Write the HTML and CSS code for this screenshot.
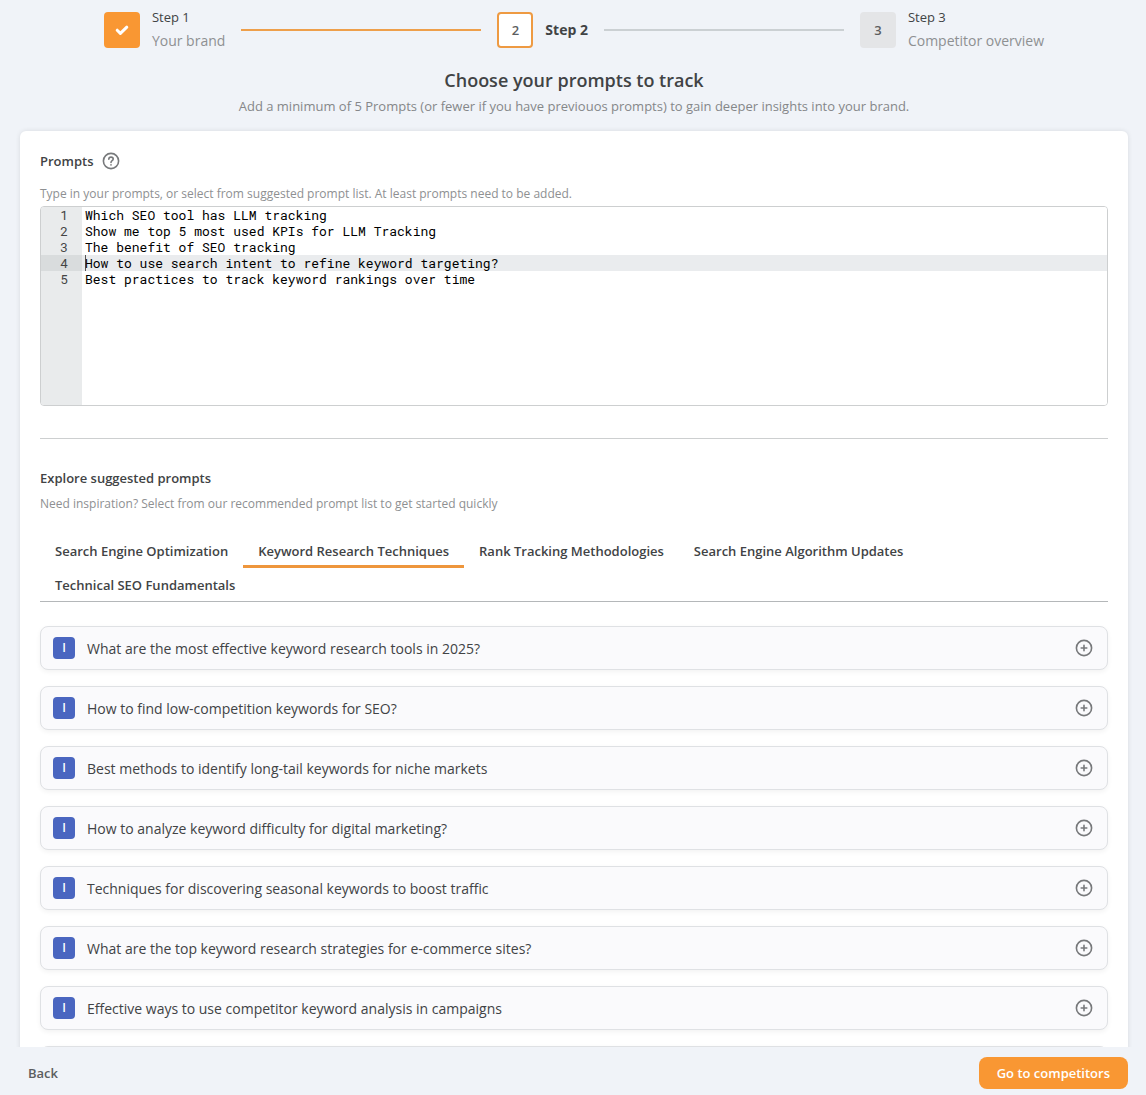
FILE: index.html
```
<!DOCTYPE html>
<html lang="en">
<head>
    <meta charset="UTF-8">
    <meta name="viewport" content="width=device-width, initial-scale=1">
    <title>Choose your prompts to track</title>
    <link rel="stylesheet" href="styles.css">
</head>
<body>
<svg class="defs" width="0" height="0">
    <symbol id="plus" viewBox="0 0 24 24">
        <circle cx="12" cy="12" r="7.6"/>
        <path d="M12 9.2v5.6M9.2 12h5.6"/>
    </symbol>
</svg>
<main class="content">
    <ol class="steps">
        <li class="step done">
            <span class="step-box">
                <svg width="16" height="16" viewBox="0 0 16 16"><path d="M3.2 8.2l3.2 3.2 6.4-6.2"/></svg>
            </span>
            <div class="step-text"><div class="step-name">Step 1</div><div class="step-desc">Your brand</div></div>
        </li>
        <li class="line line-done" aria-hidden="true"></li>
        <li class="step current">
            <span class="step-box">2</span>
            <div class="step-text">Step 2</div>
        </li>
        <li class="line" aria-hidden="true"></li>
        <li class="step next">
            <span class="step-box">3</span>
            <div class="step-text"><div class="step-name">Step 3</div><div class="step-desc">Competitor overview</div></div>
        </li>
    </ol>

    <h1>Choose your prompts to track</h1>
    <p class="lead">Add a minimum of 5 Prompts (or fewer if you have previouos prompts) to gain deeper insights into your brand.</p>

    <section class="card">
        <div class="label-row">
            <label for="prompts">Prompts</label>
            <svg class="help" width="18" height="18" viewBox="0 0 18 18">
                <circle cx="9" cy="9" r="7.6"/>
                <path d="M6.8 7.2c0-1.3 1-2.1 2.2-2.1s2.2.8 2.2 2c0 1.6-2.2 1.7-2.2 3.4"/>
                <path d="M9 12.8v.2"/>
            </svg>
        </div>
        <p class="hint">Type in your prompts, or select from suggested prompt list. At least prompts need to be added.</p>
        <div class="editor">
            <div class="gutter">
                <div>1</div>
                <div>2</div>
                <div>3</div>
                <div class="active">4</div>
                <div>5</div>
            </div>
            <textarea id="prompts" spellcheck="false" wrap="off">Which SEO tool has LLM tracking
Show me top 5 most used KPIs for LLM Tracking
The benefit of SEO tracking
How to use search intent to refine keyword targeting?
Best practices to track keyword rankings over time</textarea>
        </div>

        <hr>

        <h2>Explore suggested prompts</h2>
        <p class="hint">Need inspiration? Select from our recommended prompt list to get started quickly</p>

        <div class="tabs" role="tablist">
            <button role="tab">Search Engine Optimization</button>
            <button role="tab" class="selected" aria-selected="true">Keyword Research Techniques</button>
            <button role="tab">Rank Tracking Methodologies</button>
            <button role="tab">Search Engine Algorithm Updates</button>
            <button role="tab">Technical SEO Fundamentals</button>
        </div>

        <ul class="prompts">
            <li><span class="badge">I</span><span class="text">What are the most effective keyword research tools in 2025?</span><button class="add" aria-label="Add prompt"><svg><use href="#plus"/></svg></button></li>
            <li><span class="badge">I</span><span class="text">How to find low-competition keywords for SEO?</span><button class="add" aria-label="Add prompt"><svg><use href="#plus"/></svg></button></li>
            <li><span class="badge">I</span><span class="text">Best methods to identify long-tail keywords for niche markets</span><button class="add" aria-label="Add prompt"><svg><use href="#plus"/></svg></button></li>
            <li><span class="badge">I</span><span class="text">How to analyze keyword difficulty for digital marketing?</span><button class="add" aria-label="Add prompt"><svg><use href="#plus"/></svg></button></li>
            <li><span class="badge">I</span><span class="text">Techniques for discovering seasonal keywords to boost traffic</span><button class="add" aria-label="Add prompt"><svg><use href="#plus"/></svg></button></li>
            <li><span class="badge">I</span><span class="text">What are the top keyword research strategies for e-commerce sites?</span><button class="add" aria-label="Add prompt"><svg><use href="#plus"/></svg></button></li>
            <li><span class="badge">I</span><span class="text">Effective ways to use competitor keyword analysis in campaigns</span><button class="add" aria-label="Add prompt"><svg><use href="#plus"/></svg></button></li>
            <li></li>
        </ul>
    </section>
</main>
<footer class="footer">
    <button class="back">Back</button>
    <button class="go">Go to competitors</button>
</footer>
</body>
</html>
```
FILE: styles.css
```
*{margin: 0;padding: 0;box-sizing: border-box;}
body{height: 100vh;display: flex;flex-direction: column;background: #f0f3f8;color: #414345;font: 13px/20px "Open Sans", sans-serif;}
button{font: inherit;color: inherit;background: none;border: 0;cursor: pointer;}
ol,ul{list-style: none;}
svg{fill: none;stroke-linecap: round;stroke-linejoin: round;}
.defs{position: absolute;}

.content{flex: 1;min-height: 0;overflow-y: auto;scrollbar-width: none;padding: 6px 18px 0 20px;}

/* steps */
.steps{display: flex;justify-content: center;align-items: center;gap: 16px;height: 48px;}
.step{display: flex;align-items: center;gap: 12px;white-space: nowrap;}
.step-box{width: 36px;height: 36px;border-radius: 4px;display: flex;align-items: center;justify-content: center;font-weight: 600;color: #5c5e60;background: #e4e5e7;}
.done .step-box{background: #f99733;}
.done svg{stroke: #fff;stroke-width: 3;}
.current .step-box{background: #fff;border: 2px solid #ee9a42;}
.current .step-text{font-size: 14px;font-weight: 700;}
.step-name{line-height: 22px;}
.step-desc{font-size: 14px;line-height: 26px;color: #8e9092;}
.line{flex: 0 1 240px;height: 2px;background: #cbd0d3;}
.line-done{background: #ee9f4b;}

h1{margin-top: 12px;font-size: 18px;line-height: 28px;font-weight: 600;text-align: center;}
.lead{margin: 2px 0 15px;text-align: center;color: #858789;}

.card{background: #fff;border-radius: 6px;padding: 20px;box-shadow: 0 0 5px rgba(0,0,0,.1);}
.label-row{display: flex;align-items: center;gap: 8px;margin-bottom: 13px;font-weight: 600;}
.help{stroke: #77797b;stroke-width: 1.6;}
.hint{font-size: 12px;color: #8e9092;}

/* editor */
.editor{display: flex;height: 200px;margin-top: 2px;border: 1px solid #cdcfd0;border-radius: 4px;overflow: hidden;font: 13px/16px "Roboto Mono", "DejaVu Sans Mono", monospace;}
.gutter{width: 41px;background: #e9ebec;color: #444;text-align: right;}
.gutter div{padding-right: 14px;}
.gutter .active{background: #d9dcdd;}
textarea{
    flex: 1;
    min-width: 0;
    border: 0;
    outline: 0;
    resize: none;
    padding: 0 3px;
    font: inherit;
    color: #000;
    /* caret and current line */
    background: linear-gradient(#555,#555) 3px 48px / 1px 16px no-repeat, linear-gradient(#eaecee,#eaecee) 0 48px / 100% 16px no-repeat #fff;
}

hr{border: 0;border-top: 1px solid #cdcfd0;margin: 32px 0 29px;}
h2{font-size: 13px;line-height: 20px;font-weight: 600;margin-bottom: 6px;}

/* tabs */
.tabs{display: flex;flex-wrap: wrap;margin-top: 20px;box-shadow: inset 0 -1px #b4b7b9;}
.tabs button{height: 34px;padding: 3px 15px 0;font-weight: 600;border-bottom: 3px solid transparent;}
.tabs .selected{border-color: #ee963c;}

/* suggested prompts */
.prompts{margin-top: 24px;display: flex;flex-direction: column;gap: 16px;}
.prompts li{display: flex;align-items: center;gap: 12px;height: 44px;padding: 0 11px 0 12px;border: 1px solid #dfe1e4;border-radius: 8px;background: #fafafc;box-shadow: 0 2px 5px rgba(0,0,0,.05);}
.badge{width: 22px;height: 22px;border-radius: 4px;background: #4a66c0;color: #fff;font-size: 12px;line-height: 22px;font-weight: 600;text-align: center;}
.text{flex: 1;padding-top: 2px;font-size: 14px;}
.add,.add svg{width: 24px;height: 24px;display: block;stroke: #77797b;stroke-width: 1.6;}

.footer{display: flex;justify-content: space-between;align-items: center;height: 48px;padding: 4px 18px 0 20px;}
.back{padding: 6px 8px;font-weight: 600;color: #5c5e60;}
.go{padding: 6px 18px;border-radius: 8px;background: #f99733;color: #fff;font-weight: 600;}
```
